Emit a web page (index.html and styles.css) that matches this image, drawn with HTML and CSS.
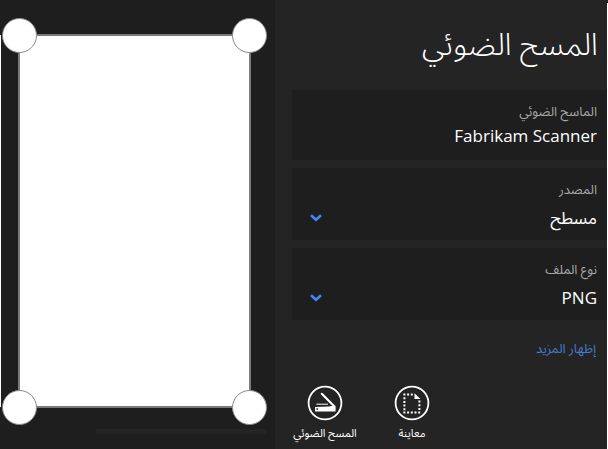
FILE: index.html
```html
<!DOCTYPE html>
<html lang="ar" dir="rtl">
<head>
<meta charset="utf-8">
<title>المسح الضوئي</title>
<link rel="stylesheet" href="styles.css">
</head>
<body>
<main class="app">
  <section class="panel">
    <h1 class="title">المسح الضوئي</h1>
    <div class="cards">
      <div class="card">
        <span class="label">الماسح الضوئي</span>
        <span class="value" dir="ltr">Fabrikam Scanner</span>
      </div>
      <div class="card">
        <label class="label" for="source">المصدر</label>
        <div class="picker">
          <select class="value select" id="source"><option>مسطح</option></select>
          <svg class="chevron" viewBox="0 0 12 8" aria-hidden="true"><path d="M1 1.2 L6 5.8 L11 1.2"/></svg>
        </div>
      </div>
      <div class="card">
        <label class="label" for="filetype">نوع الملف</label>
        <div class="picker">
          <select class="value select" id="filetype"><option>PNG</option></select>
          <svg class="chevron" viewBox="0 0 12 8" aria-hidden="true"><path d="M1 1.2 L6 5.8 L11 1.2"/></svg>
        </div>
      </div>
    </div>
    <a class="more" href="#more">إظهار المزيد</a>
    <div class="actions">
      <button class="action" type="button">
        <svg class="icon" viewBox="0 0 36 36" aria-hidden="true">
          <circle class="ring" cx="18" cy="18" r="16.4"/>
          <path class="dots" d="M9.4 9.4H20M9.4 27.6H26.4M10.4 12.2V27M25.4 15.6V27"/>
          <path class="solid" d="M20.5 8.2V14H26.4Z"/>
        </svg>
        <span>معاينة</span>
      </button>
      <button class="action" type="button">
        <svg class="icon" viewBox="0 0 36 36" aria-hidden="true">
          <circle class="ring" cx="18" cy="18" r="16.4"/>
          <path class="lid" d="M14.8 8.8L27.4 21.6"/>
          <path class="thin" d="M9.4 19.2H21"/>
          <path class="solid" fill-rule="evenodd" d="M8 22L22 21.6L26.6 20.4Q28.6 20.8 28.6 22.4V26.4H8ZM9.4 23.2V24.8H11V23.2Z"/>
        </svg>
        <span>المسح الضوئي</span>
      </button>
    </div>
  </section>
  <section class="preview">
    <div class="page">
      <span class="handle top start"></span>
      <span class="handle top end"></span>
      <span class="handle bottom start"></span>
      <span class="handle bottom end"></span>
    </div>
    <div class="track"></div>
  </section>
</main>
</body>
</html>
```
FILE: styles.css
```css
* { box-sizing: border-box; }
body {
  margin: 0;
  background: #1e1e1e;
  color: #fff;
  font-family: "Open Sans", "Noto Sans Arabic", "Segoe UI", "DejaVu Sans", sans-serif;
}
.app {
  display: grid;
  grid-template-columns: 333fr 275fr;
  min-height: 100vh;
}
.panel {
  position: relative;
  display: flex;
  flex-direction: column;
  align-items: flex-start;
  background: #242424;
  padding: 14px 1px 8px 17px;
}
.panel::after {
  content: "";
  position: absolute;
  inset: 3px 0 0 auto;
  width: 1px;
  background: #fff;
}
.title {
  margin: 0 9px 18px;
  font-size: 31px;
  line-height: 58px;
  font-weight: 300;
}
.cards {
  align-self: stretch;
  display: flex;
  flex-direction: column;
  gap: 8px;
}
.card {
  display: flex;
  flex-direction: column;
  align-items: flex-start;
  height: 72px;
  padding: 9px 10px 0 24px;
  background: #1e1e1e;
}
.card:first-child { height: 70px; }
.label {
  font-size: 13px;
  line-height: 24px;
  color: #a6a6a6;
}
.value {
  font-size: 17px;
  line-height: 26px;
  color: #fff;
}
.picker {
  align-self: stretch;
  display: flex;
  align-items: center;
  position: relative;
  padding-top: 4px;
}
.select {
  width: 100%;
  height: 26px;
  appearance: none;
  border: 0;
  padding: 0;
  background: transparent;
  font-family: inherit;
}
.chevron {
  position: absolute;
  left: -6px;
  width: 12px;
  height: 8px;
  fill: none;
  stroke: #4285f4;
  stroke-width: 2.6;
}
.more {
  margin: 16px 11px 25px;
  font-size: 13px;
  line-height: 24px;
  color: #4679c9;
  text-decoration: none;
}
.actions {
  align-self: flex-end;
  display: flex;
  gap: 21px;
}
.action {
  display: flex;
  flex-direction: column;
  align-items: center;
  gap: 4px;
  min-width: 66px;
  padding: 0;
  border: 0;
  background: none;
  color: #fff;
  font-family: inherit;
  font-size: 11px;
  line-height: 16px;
}
.icon { width: 36px; height: 36px; }
.ring { fill: none; stroke: #fff; stroke-width: 1.8; }
.dots { fill: none; stroke: #fff; stroke-width: 2; stroke-dasharray: 2 1.7; }
.solid { fill: #fff; }
.lid { stroke: #fff; stroke-width: 2.2; stroke-linecap: round; }
.thin { stroke: #fff; stroke-width: 1; }
.preview {
  display: flex;
  flex-direction: column;
  align-items: stretch;
  padding: 34px 24px 15px 18px;
  background: linear-gradient(#fff, #fff) left 0 top 35px / 1px calc(100% - 77px) no-repeat #1e1e1e;
}
.page {
  position: relative;
  flex: 1;
  border: 2px solid #7b7b7b;
  background: #fff;
}
.handle {
  position: absolute;
  width: 35px;
  height: 35px;
  border: 1px solid #8a8a8a;
  border-radius: 50%;
  background: #fff;
}
.top { top: -18px; }
.bottom { bottom: -19px; }
.start { left: -18px; }
.end { right: -18px; }
.track {
  height: 5px;
  margin: 21px -16px 0 78px;
  background: #242424;
}
```
